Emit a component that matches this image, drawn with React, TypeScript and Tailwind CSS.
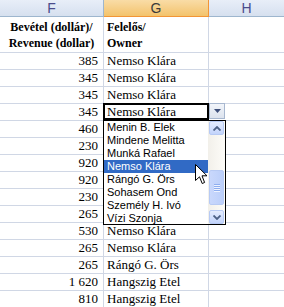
import React from 'react';

const rows: [string, string][] = [
  ['385', 'Nemso Klára'],
  ['345', 'Nemso Klára'],
  ['345', 'Nemso Klára'],
  ['345', 'Nemso Klára'],
  ['460', ''],
  ['230', ''],
  ['920', ''],
  ['920', ''],
  ['230', ''],
  ['265', ''],
  ['530', 'Nemso Klára'],
  ['265', 'Nemso Klára'],
  ['265', 'Rángó G. Örs'],
  ['1 620', 'Hangszig Etel'],
  ['810', 'Hangszig Etel'],
];

const owners = [
  'Menin B. Elek',
  'Mindene Melitta',
  'Munká Rafael',
  'Nemso Klára',
  'Rángó G. Örs',
  'Sohasem Ond',
  'Személy H. Ivó',
  'Vízi Szonja',
];

const Chevron = ({ up }: { up?: boolean }) => (
  <svg width="8" height="5" viewBox="0 0 8 5">
    <path
      d={up ? 'M0.5 4.5 L4 1 L7.5 4.5' : 'M0.5 0.5 L4 4 L7.5 0.5'}
      fill="none"
      stroke="#4D6185"
      strokeWidth="1.8"
    />
  </svg>
);

const ScrollBtn = ({ up }: { up?: boolean }) => (
  <div className="h-[14px] mx-[1px] rounded-[2px] border border-[#B7CAF4] bg-linear-to-b from-[#E4ECFE] to-[#C3D4FB] flex items-center justify-center">
    <Chevron up={up} />
  </div>
);

export default function App() {
  const serif = { fontFamily: '"Liberation Serif", "Times New Roman", serif' };
  return (
    <div className="relative w-[284px] h-[307px] overflow-hidden bg-white text-black">
      <div className="grid grid-cols-[104px_105px_1fr]" style={serif}>
        {/* column letters */}
        <div
          className="h-[17px] border-r border-b border-[#9EB6CE] bg-linear-to-b from-[#E8EEF8] to-[#D6E0EF] flex items-center justify-center text-[14px] text-[#4A4C8C]"
          style={{ fontFamily: '"Liberation Sans", Arial, sans-serif' }}
        >
          F
        </div>
        <div
          className="h-[17px] border-r border-b border-[#F29536] bg-linear-to-b from-[#F9DCA6] to-[#F3C36B] flex items-center justify-center text-[14px] text-[#3A3A3A]"
          style={{ fontFamily: '"Liberation Sans", Arial, sans-serif' }}
        >
          G
        </div>
        <div
          className="h-[17px] border-b border-[#9EB6CE] bg-linear-to-b from-[#E8EEF8] to-[#D6E0EF] flex items-center justify-center text-[14px] text-[#4A4C8C]"
          style={{ fontFamily: '"Liberation Sans", Arial, sans-serif' }}
        >
          H
        </div>

        {/* header text row */}
        <div className="h-[36px] border-r border-b border-[#D0D7E5] flex flex-col items-center justify-center font-bold text-[12px] leading-[16px]">
          <span>Bevétel (dollár)/</span>
          <span>Revenue (dollar)</span>
        </div>
        <div className="h-[36px] border-r border-b border-[#D0D7E5] flex flex-col justify-center pl-[3px] font-bold text-[12px] leading-[16px]">
          <span>Felelős/</span>
          <span>Owner</span>
        </div>
        <div className="h-[36px] border-b border-[#D0D7E5]" />

        {rows.map(([rev, owner], i) => (
          <React.Fragment key={i}>
            <div className="h-[17px] border-r border-b border-[#D0D7E5] text-right pr-[5px] text-[13px] leading-[16px]">
              {rev}
            </div>
            <div className="h-[17px] border-r border-b border-[#D0D7E5] pl-[3px] text-[13px] leading-[16px] whitespace-nowrap">
              {owner}
            </div>
            <div className="h-[17px] border-b border-[#D0D7E5]" />
          </React.Fragment>
        ))}
      </div>

      {/* active cell frame */}
      <div className="absolute left-[103px] top-[103px] w-[106px] h-[17px] border-2 border-black" />

      {/* validation drop-down button */}
      <div className="absolute left-[209px] top-[103px] w-[16px] h-[16px] border border-[#A7B7CF] bg-linear-to-b from-[#F2F5FA] to-[#DCE3EE] flex items-center justify-center">
        <svg width="7" height="4" viewBox="0 0 7 4">
          <path d="M0 0 H7 L3.5 4 Z" fill="#3E4F7A" />
        </svg>
      </div>

      {/* list */}
      <div
        className="absolute left-[103px] top-[120px] w-[123px] h-[105px] border border-black bg-white flex overflow-hidden"
        style={{ fontFamily: '"Liberation Sans", Tahoma, Arial, sans-serif' }}
      >
        <div className="flex-1 flex flex-col">
          {owners.map((o) => (
            <div
              key={o}
              className={
                'h-[13px] shrink-0 pl-[3px] text-[11px] leading-[13px] whitespace-nowrap ' +
                (o === 'Nemso Klára' ? 'bg-[#316AC5] text-white' : 'text-black')
              }
            >
              {o}
            </div>
          ))}
        </div>
        <div className="w-[17px] flex flex-col bg-linear-to-r from-[#F2F0EA] to-[#FDFCF8]">
          <ScrollBtn up />
          <div className="flex-1 flex flex-col pt-[35px] pb-[2px]">
            <div className="h-[35px] mx-[1px] rounded-[2px] border border-[#B7CAF4] bg-linear-to-r from-[#C9D8FC] to-[#BCCFFA] flex flex-col items-center justify-center gap-[1px]">
              {[0, 1, 2, 3].map((k) => (
                <div key={k} className="w-[6px] h-[1px] bg-[#8EAEF0] shadow-[0_1px_0_#EEF3FF]" />
              ))}
            </div>
          </div>
          <ScrollBtn />
        </div>
      </div>

      {/* mouse pointer */}
      <svg className="absolute left-[195px] top-[164px]" width="13" height="21" viewBox="0 0 13 21">
        <path
          d="M0.5 0.5 L0.5 16.5 L4.5 12.8 L7.2 19.5 L9.6 18.5 L7 11.8 L12 11.8 Z"
          fill="white"
          stroke="black"
          strokeWidth="1"
          strokeLinejoin="miter"
        />
      </svg>
    </div>
  );
}
